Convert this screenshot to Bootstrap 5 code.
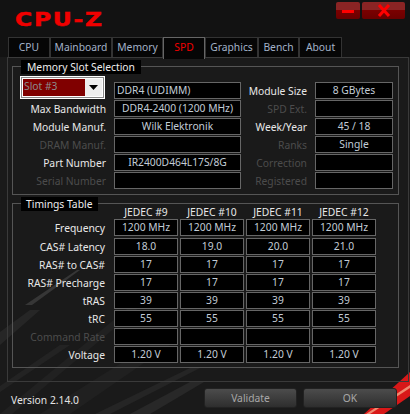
<!DOCTYPE html>
<html lang="en">
<head>
  <meta charset="UTF-8">
  <meta name="viewport" content="width=device-width, initial-scale=1.0">
  <title>CPU-Z</title>
  <link href="https://cdn.jsdelivr.net/npm/bootstrap@5.3.0/dist/css/bootstrap.min.css" rel="stylesheet">
  <style>
    body {
      width: 410px;
      height: 414px;
      overflow: hidden;
      position: relative;
      background: #1a1a1a;
      font-family: "Noto Sans", sans-serif;
      font-size: 10.3px;
      line-height: 17px;
      color: #e8e8e8;
    }
    .bg-art { position: absolute; left: 0; top: 0; width: 410px; height: 414px; }
    .app { position: relative; }

    .titlebar { height: 37px; background: #121212; padding: 2px 5px 0 15px; }
    .logo {
      font-family: "DejaVu Sans", sans-serif;
      font-weight: 700;
      font-size: 20px;
      line-height: 24px;
      letter-spacing: 1.5px;
      color: #f00000;
      margin-top: 5px;
      -webkit-text-stroke: 0.5px #f00000;
      transform: scaleX(1.17);
      transform-origin: left center;
    }
    .win-btn {
      height: 17px;
      border-radius: 2px;
      background: linear-gradient(#8a2424 0, #8a2424 45%, #7a0000 50%, #6a0000 100%);
      display: flex;
      align-items: center;
      justify-content: center;
    }
    .win-min { width: 24px; margin-right: 2px; }
    .win-close { width: 43px; }

    .cz-tabs { height: 20px; background: #121212; padding-left: 8px; border: 0; flex-wrap: nowrap; }
    .cz-tabs .nav-link {
      height: 20px;
      padding: 1px 0 0;
      text-align: center;
      border: 1px solid #333;
      border-bottom: 0;
      border-radius: 0;
      background: #060606;
      color: #a3b2c8;
      font-size: 10.3px;
      line-height: 17px;
      margin: 0;
    }
    .cz-tabs .nav-link.active {
      height: 22px;
      position: relative;
      z-index: 2;
      background: #060606;
      border-color: #666;
      border-width: 1px 1px 0;
      color: #f00000;
    }
    .tab-cpu { width: 42px; }
    .tab-main { width: 62px; }
    .tab-mem { width: 51px; }
    .tab-spd { width: 42px; }
    .tab-gfx { width: 53px; }
    .tab-bench { width: 41px; }
    .tab-about { width: 43px; }

    .panel {
      margin-left: 7px;
      width: 402px;
      height: 325px;
      border: 1px solid #3a3a3a;
      padding: 8px 0 0 4px;
    }
    .grp { width: 387px; border: 1px solid #555; }
    .grp-slot { height: 129px; }
    .grp-time { height: 165px; margin-top: 8px; }
    .grp-title {
      position: relative;
      z-index: 1;
      width: 120px;
      height: 14px;
      line-height: 14px;
      margin: -7px 0 0 8px;
      padding: 0 6px;
      background: #000;
      color: #eee;
      white-space: nowrap;
    }
    .grp-time .grp-title { width: 77px; padding-left: 5px; }

    .slot-grid {
      display: grid;
      grid-template-columns: 101px 127px 74px 78px;
      grid-template-rows: 23px repeat(5, 17px);
      row-gap: 1px;
      margin-top: 2px;
    }
    .time-grid {
      display: grid;
      grid-template-columns: 99px repeat(4, 64px);
      grid-template-rows: 14px 18px repeat(7, 17px);
      column-gap: 2px;
      row-gap: 1px;
      margin-top: -7px;
    }
    .lbl { text-align: right; white-space: nowrap; line-height: 19px; height: 17px; }
    .slot-grid .lbl { padding-right: 8px; }
    .slot-grid .lbl.first { align-self: end; }
    .time-grid .lbl { padding-right: 7px; }
    .off { color: #4c4c4c; }
    .box {
      height: 17px;
      background: #000;
      border: 1px solid #666;
      color: #c2ccd6;
      text-align: center;
      line-height: 14px;
      white-space: nowrap;
      overflow: hidden;
    }
    .box.first { align-self: end; }
    .box-left { text-align: left; padding-left: 2px; }
    .jedec { text-align: center; color: #e8e8e8; line-height: 16px; white-space: nowrap; }

    .slot-pick {
      width: 85px;
      height: 23px;
      margin-left: 7px;
      background: #fff;
      border: 2px solid #fff;
      outline: 1px solid #888;
      outline-offset: -2px;
      padding: 1px;
    }
    .slot-val { flex: 1; background: #800000; color: #8c8c8c; line-height: 15px; padding-left: 1px; }
    .slot-arrow { width: 17px; background: #eee; display: flex; align-items: center; justify-content: center; }

    .foot { height: 32px; padding: 6px 13px 0 11px; }
    .ver { line-height: 24px; color: #e4e4e4; }
    .cz-btn {
      height: 20px;
      padding: 0;
      border: 1px solid #222;
      border-radius: 3px;
      background: linear-gradient(#4c4c4c, #2e2e2e);
      color: #a8a8a8;
      font-size: 10.3px;
      line-height: 17px;
    }
    .btn-val { width: 93px; margin-right: 6px; }
    .btn-ok { width: 94px; }
  </style>
</head>
<body>
  <!-- window skin: faint streaks and the red band -->
  <svg class="bg-art" viewBox="0 0 410 414">
    <polygon points="0,414 12,414 160,290 150,290" fill="#212121"/>
    <polygon points="25,305 32,305 80,270 77,270" fill="#363636"/>
    <polygon points="0,345 0,332 30,310 40,310" fill="#262626"/>
    <polygon points="40,414 70,414 170,345 150,345" fill="#202020"/>
    <polygon points="95,414 110,414 200,368 190,368" fill="#252525"/>
    <polygon points="0,392 0,386 60,345 70,345" fill="#232323"/>
    <polygon points="130,414 150,414 204,382 190,382" fill="#282828"/>
    <polygon points="410,372 410,396 384,414 364,414" fill="#d81818"/>
    <polygon points="410,385 410,388 370,414 366,414" fill="#f08a70"/>
  </svg>

  <div class="app">
    <div class="titlebar d-flex justify-content-between align-items-start">
      <div class="logo">CPU-Z</div>
      <div class="d-flex">
        <div class="win-btn win-min">
          <svg width="12" height="4" viewBox="0 0 12 4"><rect width="12" height="3" y="1" fill="#f00"/></svg>
        </div>
        <div class="win-btn win-close">
          <svg width="14" height="13" viewBox="0 0 14 13"><path d="M2 1l10 11M12 1L2 12" stroke="#f00" stroke-width="3" fill="none"/></svg>
        </div>
      </div>
    </div>

    <ul class="nav nav-tabs cz-tabs">
      <li class="nav-item"><a class="nav-link tab-cpu" href="#">CPU</a></li>
      <li class="nav-item"><a class="nav-link tab-main" href="#">Mainboard</a></li>
      <li class="nav-item"><a class="nav-link tab-mem" href="#">Memory</a></li>
      <li class="nav-item"><a class="nav-link tab-spd active" href="#">SPD</a></li>
      <li class="nav-item"><a class="nav-link tab-gfx" href="#">Graphics</a></li>
      <li class="nav-item"><a class="nav-link tab-bench" href="#">Bench</a></li>
      <li class="nav-item"><a class="nav-link tab-about" href="#">About</a></li>
    </ul>

    <div class="panel">
      <div class="grp grp-slot">
        <div class="grp-title">Memory Slot Selection</div>
        <div class="slot-grid">
          <div class="slot-pick d-flex">
            <div class="slot-val">Slot #3</div>
            <div class="slot-arrow">
              <svg width="9" height="5" viewBox="0 0 9 5"><path d="M0 0h9L4.500 5z" fill="#000"/></svg>
            </div>
          </div>
          <div class="box box-left first">DDR4 (UDIMM)</div>
          <div class="lbl first">Module Size</div>
          <div class="box first">8 GBytes</div>

          <div class="lbl">Max Bandwidth</div>
          <div class="box">DDR4-2400 (1200 MHz)</div>
          <div class="lbl off">SPD Ext.</div>
          <div class="box"></div>

          <div class="lbl">Module Manuf.</div>
          <div class="box">Wilk Elektronik</div>
          <div class="lbl">Week/Year</div>
          <div class="box">45 / 18</div>

          <div class="lbl off">DRAM Manuf.</div>
          <div class="box"></div>
          <div class="lbl off">Ranks</div>
          <div class="box">Single</div>

          <div class="lbl">Part Number</div>
          <div class="box">IR2400D464L17S/8G</div>
          <div class="lbl off">Correction</div>
          <div class="box"></div>

          <div class="lbl off">Serial Number</div>
          <div class="box"></div>
          <div class="lbl off">Registered</div>
          <div class="box"></div>
        </div>
      </div>

      <div class="grp grp-time">
        <div class="grp-title">Timings Table</div>
        <div class="time-grid">
          <div></div>
          <div class="jedec">JEDEC #9</div>
          <div class="jedec">JEDEC #10</div>
          <div class="jedec">JEDEC #11</div>
          <div class="jedec">JEDEC #12</div>

          <div class="lbl">Frequency</div>
          <div class="box">1200 MHz</div>
          <div class="box">1200 MHz</div>
          <div class="box">1200 MHz</div>
          <div class="box">1200 MHz</div>

          <div class="lbl">CAS# Latency</div>
          <div class="box">18.0</div>
          <div class="box">19.0</div>
          <div class="box">20.0</div>
          <div class="box">21.0</div>

          <div class="lbl">RAS# to CAS#</div>
          <div class="box">17</div>
          <div class="box">17</div>
          <div class="box">17</div>
          <div class="box">17</div>

          <div class="lbl">RAS# Precharge</div>
          <div class="box">17</div>
          <div class="box">17</div>
          <div class="box">17</div>
          <div class="box">17</div>

          <div class="lbl">tRAS</div>
          <div class="box">39</div>
          <div class="box">39</div>
          <div class="box">39</div>
          <div class="box">39</div>

          <div class="lbl">tRC</div>
          <div class="box">55</div>
          <div class="box">55</div>
          <div class="box">55</div>
          <div class="box">55</div>

          <div class="lbl off">Command Rate</div>
          <div class="box"></div>
          <div class="box"></div>
          <div class="box"></div>
          <div class="box"></div>

          <div class="lbl">Voltage</div>
          <div class="box">1.20 V</div>
          <div class="box">1.20 V</div>
          <div class="box">1.20 V</div>
          <div class="box">1.20 V</div>
        </div>
      </div>
    </div>

    <div class="foot d-flex justify-content-between align-items-start">
      <div class="ver">Version 2.14.0</div>
      <div class="d-flex">
        <button class="btn cz-btn btn-val" type="button">Validate</button>
        <button class="btn cz-btn btn-ok" type="button">OK</button>
      </div>
    </div>
  </div>

  <script src="https://cdn.jsdelivr.net/npm/bootstrap@5.3.0/dist/js/bootstrap.bundle.min.js"></script>
</body>
</html>
